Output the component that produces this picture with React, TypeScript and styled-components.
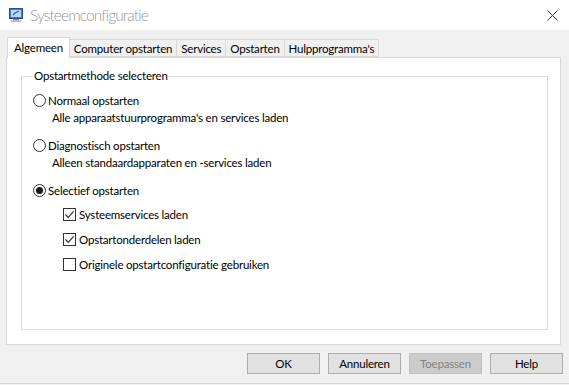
import React from "react";
import styled, { createGlobalStyle } from "styled-components";

const Global = createGlobalStyle`
  html, body { margin: 0; padding: 0; background: #f0f0f0; }
  body { font-family: "Segoe UI", Lato, "Noto Sans", sans-serif; font-size: 11.5px; letter-spacing: -0.2px; color: #000; }
  * { box-sizing: border-box; }
`;

const Window = styled.div`
  width: 569px;
  height: 385px;
  display: flex;
  flex-direction: column;
  background: #f0f0f0;
  overflow: hidden;
`;

const TitleBar = styled.div`
  height: 30px;
  background: #fff;
  display: flex;
  align-items: center;
  padding-left: 8px;
  padding-right: 11px;
  flex-shrink: 0;
`;

const Title = styled.div`
  margin-left: 6px;
  font-size: 15.5px;
  font-weight: 300;
  letter-spacing: -0.9px;
  color: #999;
  flex: 1;
`;

const Body = styled.div`
  flex: 1;
  display: flex;
  flex-direction: column;
  padding: 7px 8px 0 6px;
  border-bottom: 1px solid #d5d5d5;
  margin-bottom: 1px;
`;

const Tabs = styled.div`
  display: flex;
  align-items: flex-end;
  height: 20px;
  padding-left: 1px;
`;

const Tab = styled.div<{ $active?: boolean }>`
  height: ${(p) => (p.$active ? "21px" : "18px")};
  margin-bottom: ${(p) => (p.$active ? "-1px" : "0")};
  padding: ${(p) => (p.$active ? "2px 6px 0 6px" : "1px 4px 0 4px")};
  background: ${(p) => (p.$active ? "#fff" : "#f0f0f0")};
  border: 1px solid #d9d9d9;
  border-bottom: ${(p) => (p.$active ? "none" : "1px solid #d9d9d9")};
  margin-right: -1px;
  position: relative;
  z-index: ${(p) => (p.$active ? 2 : 1)};
  white-space: nowrap;
  line-height: 15px;
`;

const Panel = styled.div`
  height: 288px;
  width: 555px;
  background: #fff;
  border: 1px solid #d9d9d9;
  padding: 10px 12px 14px 14px;
  display: flex;
  flex-direction: column;
`;

const Group = styled.fieldset`
  margin: 0;
  flex: 1;
  border: 1px solid #dcdcdc;
  padding: 0 0 0 11px;
  min-width: 0;
`;

const Legend = styled.legend`
  padding: 0 1px;
  margin-left: 0;
  line-height: 16px;
`;

const Options = styled.div`
  display: flex;
  flex-direction: column;
  padding-top: 7px;
`;

const OptionRow = styled.label`
  display: flex;
  align-items: center;
  height: 18px;
  gap: 2px;
`;

const Sub = styled.div`
  height: 18px;
  line-height: 18px;
  padding-left: 19px;
  margin-bottom: 9px;
`;

const Radio = styled.span<{ $on?: boolean }>`
  width: 13px;
  height: 13px;
  border-radius: 50%;
  border: 1px solid #333;
  display: inline-flex;
  align-items: center;
  justify-content: center;
  background: #fff;
  flex-shrink: 0;
  &::after {
    content: "";
    width: 7px;
    height: 7px;
    border-radius: 50%;
    background: ${(p) => (p.$on ? "#1a1a1a" : "transparent")};
  }
`;

const Checks = styled.div`
  display: flex;
  flex-direction: column;
  padding-left: 30px;
  padding-top: 6px;
  gap: 7px;
`;

const CheckRow = styled.label`
  display: flex;
  align-items: center;
  height: 18px;
  gap: 3px;
`;

const Box = styled.span`
  width: 13px;
  height: 13px;
  border: 1px solid #333;
  background: #fff;
  display: inline-flex;
  align-items: center;
  justify-content: center;
  flex-shrink: 0;
`;

const Footer = styled.div`
  display: flex;
  justify-content: flex-end;
  gap: 8px;
  padding-top: 8px;
  margin-right: -2px;
`;

const Button = styled.button<{ $disabled?: boolean }>`
  width: 73px;
  height: 21px;
  font-family: inherit;
  font-size: 11.5px;
  letter-spacing: -0.2px;
  padding: 0;
  border: 1px solid ${(p) => (p.$disabled ? "#bfbfbf" : "#adadad")};
  background: ${(p) => (p.$disabled ? "#cccccc" : "#e1e1e1")};
  color: ${(p) => (p.$disabled ? "#838383" : "#000")};
`;

const AppIcon = () => (
  <svg width="16" height="16" viewBox="0 0 16 16">
    <rect x="1.5" y="1.5" width="13" height="10" fill="#3a7bd5" stroke="#2a4f8a" />
    <rect x="3" y="3" width="10" height="7" fill="#b8d8f5" />
    <path d="M5 8 L7 6 L11 4" stroke="#2c5fa8" strokeWidth="1.2" fill="none" />
    <rect x="5" y="12" width="6" height="1.5" fill="#888" />
    <rect x="3" y="13.5" width="10" height="1.5" fill="#bbb" />
  </svg>
);

const CloseIcon = () => (
  <svg width="11" height="11" viewBox="0 0 11 11">
    <path d="M0.5 0.5 L10.5 10.5 M10.5 0.5 L0.5 10.5" stroke="#333" strokeWidth="1" />
  </svg>
);

const Tick = () => (
  <svg width="11" height="11" viewBox="0 0 11 11">
    <path d="M1.5 5.5 L4.2 8.3 L9.6 2.4" stroke="#333" strokeWidth="1.2" fill="none" />
  </svg>
);

export default function App() {
  return (
    <>
      <Global />
      <Window>
        <TitleBar>
          <AppIcon />
          <Title>Systeemconfiguratie</Title>
          <CloseIcon />
        </TitleBar>
        <Body>
          <Tabs>
            <Tab $active>Algemeen</Tab>
            <Tab>Computer opstarten</Tab>
            <Tab>Services</Tab>
            <Tab>Opstarten</Tab>
            <Tab>Hulpprogramma's</Tab>
          </Tabs>
          <Panel>
            <Group>
              <Legend>Opstartmethode selecteren</Legend>
              <Options>
                <OptionRow>
                  <Radio />
                  Normaal opstarten
                </OptionRow>
                <Sub>Alle apparaatstuurprogramma's en services laden</Sub>
                <OptionRow>
                  <Radio />
                  Diagnostisch opstarten
                </OptionRow>
                <Sub>Alleen standaardapparaten en -services laden</Sub>
                <OptionRow>
                  <Radio $on />
                  Selectief opstarten
                </OptionRow>
                <Checks>
                  <CheckRow>
                    <Box><Tick /></Box>
                    Systeemservices laden
                  </CheckRow>
                  <CheckRow>
                    <Box><Tick /></Box>
                    Opstartonderdelen laden
                  </CheckRow>
                  <CheckRow>
                    <Box />
                    Originele opstartconfiguratie gebruiken
                  </CheckRow>
                </Checks>
              </Options>
            </Group>
          </Panel>
          <Footer>
            <Button>OK</Button>
            <Button>Annuleren</Button>
            <Button $disabled>Toepassen</Button>
            <Button>Help</Button>
          </Footer>
        </Body>
      </Window>
    </>
  );
}
